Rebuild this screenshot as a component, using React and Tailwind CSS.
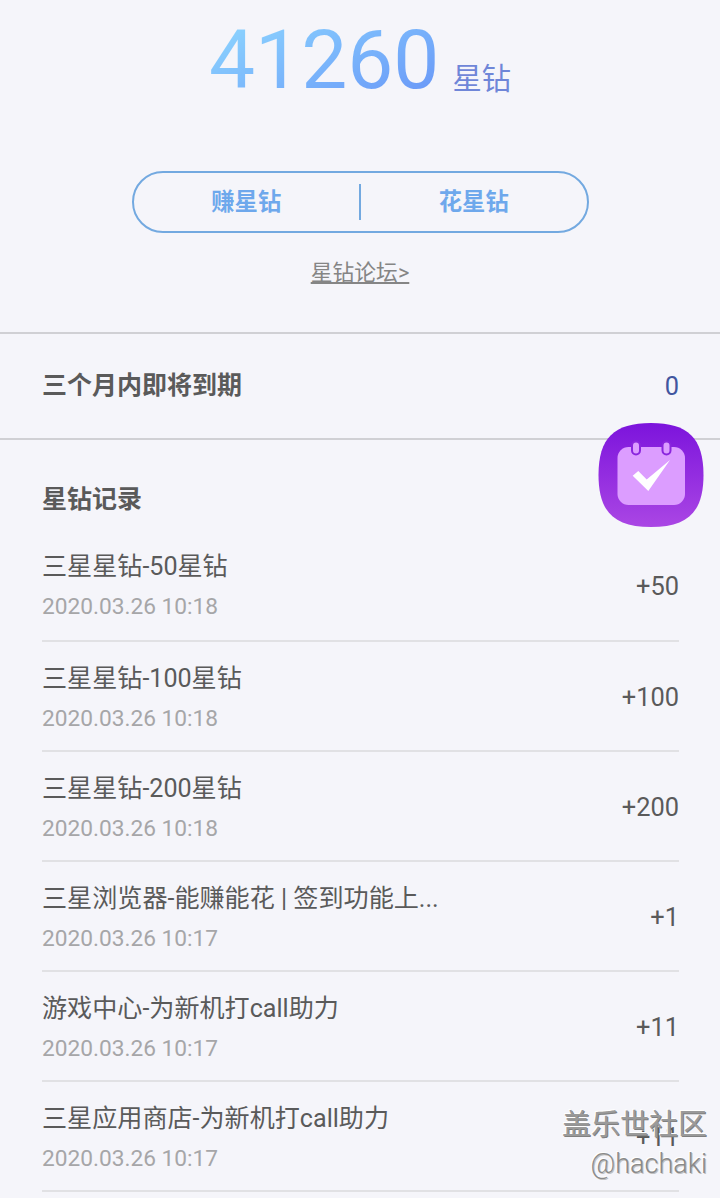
const cjk = "font-['Roboto','Noto_Sans_CJK_SC',sans-serif]";

const records = [
  { title: '三星星钻-50星钻', date: '2020.03.26 10:18', amount: '+50' },
  { title: '三星星钻-100星钻', date: '2020.03.26 10:18', amount: '+100' },
  { title: '三星星钻-200星钻', date: '2020.03.26 10:18', amount: '+200' },
  { title: '三星浏览器-能赚能花 | 签到功能上...', date: '2020.03.26 10:17', amount: '+1' },
  { title: '游戏中心-为新机打call助力', date: '2020.03.26 10:17', amount: '+11' },
  { title: '三星应用商店-为新机打call助力', date: '2020.03.26 10:17', amount: '+11' },
];

const RecordRow = ({ title, date, amount, first }) => (
  <div className={`flex h-[110px] items-center justify-between border-b-2 border-[#e1e1e4] ${first ? 'pt-0' : 'pt-[3px]'}`}>
    <div className="pt-[2px]">
      <div className="text-[25.1px] leading-[36px] text-[#5a5a5a]">{title}</div>
      <div className="mt-[4px] text-[22.7px] leading-[36px] text-[#a6a6a8]">{date}</div>
    </div>
    <div className="text-[25.4px] text-[#5a5a5a]">{amount}</div>
  </div>
);

const CalendarBadge = () => (
  <div className="absolute left-[598px] top-[422px] h-[106px] w-[106px]">
    <svg viewBox="0 0 106 106" width="106" height="106">
      <defs>
        <linearGradient id="squircle" x1="0" y1="0" x2="0" y2="1">
          <stop offset="0" stopColor="#7c14dc" />
          <stop offset="1" stopColor="#aa46e4" />
        </linearGradient>
      </defs>
      <path d="M53 1C90 1 105.500 16 105.500 53C105.500 90 90 105 53 105C16 105 0.500 90 0.500 53C0.500 16 16 1 53 1Z" fill="url(#squircle)" />
      <rect x="19.500" y="25" width="67.500" height="58" rx="11" fill="#dc9dff" />
      <rect x="34" y="19.500" width="8" height="13" rx="4" fill="#dc9dff" stroke="#8a25de" strokeWidth="2" />
      <rect x="64.500" y="19.500" width="8" height="13" rx="4" fill="#dc9dff" stroke="#8a25de" strokeWidth="2" />
      <path d="M34.700 53.700L40.300 49L48.700 57.500L72 38L50.300 69Z" fill="#ffffff" />
    </svg>
  </div>
);

export default function App() {
  return (
    <div className={`relative h-[1198px] w-[720px] overflow-hidden bg-[#f5f5fa] ${cjk}`}>
      <div className="flex h-[104px] items-end pl-[209px]">
        <span className="mb-[-8px] bg-gradient-to-br from-[#92dcff] to-[#6690f6] bg-clip-text text-[82px] font-normal leading-[104px] text-transparent">
          41260
        </span>
        <span className="mb-[5px] ml-[13px] text-[29.3px] leading-[40px] text-[#6f86d8]">星钻</span>
      </div>

      <div className="mx-auto mt-[67px] flex h-[62px] w-[457px] items-center rounded-full border-2 border-[#73a9e0]">
        <div className="flex-1 text-center text-[23.3px] font-bold text-[#6ea8ec]">赚星钻</div>
        <div className="h-[36px] w-[2px] bg-[#73a9e0]" />
        <div className="flex-1 text-center text-[23.3px] font-bold text-[#6ea8ec]">花星钻</div>
      </div>

      <div className="mt-[24px] text-center text-[21.8px] leading-[32px] text-[#858585] underline">星钻论坛&gt;</div>

      <div className="mt-[43px] flex h-[108px] items-center justify-between border-y-2 border-[#d0d0d4] pl-[42px] pr-[41px]">
        <div className="text-[25px] font-bold text-[#5a5a5a]">三个月内即将到期</div>
        <div className="text-[25.4px] text-[#42569f]">0</div>
      </div>

      <div className="pl-[42px] pr-[41px]">
        <div className="mt-[40px] text-[25px] font-bold leading-[40px] text-[#5a5a5a]">星钻记录</div>
        <div className="mt-[12px]">
          {records.map((r, i) => (
            <RecordRow key={i} {...r} first={i === 0} />
          ))}
        </div>
      </div>

      <CalendarBadge />

      <div className="absolute right-[13px] top-[1106px] text-right">
        <div className="text-[29px] leading-[38px] text-[#9a9a9a] [text-shadow:1px_1px_0_#808080,-1px_-1px_0_#ffffff]">盖乐世社区</div>
        <div className="mt-[2px] text-[27px] font-light leading-[36px] text-[#8a8a8a] [text-shadow:1px_1px_0_#c0c0c0,-1px_-1px_0_#ffffff]">@hachaki</div>
      </div>
    </div>
  );
}
